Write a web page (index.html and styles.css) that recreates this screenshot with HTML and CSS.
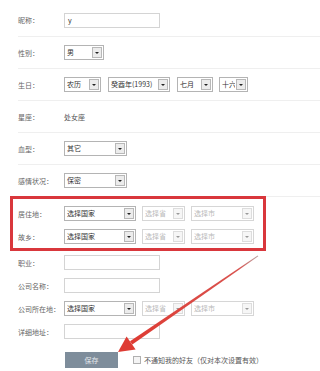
FILE: index.html
```html
<!DOCTYPE html>
<html>
<head>
<meta charset="utf-8">
<link rel="stylesheet" href="styles.css">
</head>
<body>
<div class="page">
  <div class="row r1">
    <span class="lbl">昵称：</span>
    <div class="inp">y</div>
  </div>
  <div class="row r2">
    <span class="lbl">性别：</span>
    <div class="sel w40"><span class="txt">男</span><span class="btn"></span></div>
  </div>
  <div class="row">
    <span class="lbl">生日：</span>
    <div class="sel w37"><span class="txt">农历</span><span class="btn"></span></div>
    <div class="sel w62 gap7"><span class="txt">癸酉年(1993)</span><span class="btn"></span></div>
    <div class="sel w36 gap7"><span class="txt">七月</span><span class="btn"></span></div>
    <div class="sel w28 gap6"><span class="txt">十六</span><span class="btn"></span></div>
  </div>
  <div class="row">
    <span class="lbl">星座：</span>
    <span class="val">处女座</span>
  </div>
  <div class="row">
    <span class="lbl">血型：</span>
    <div class="sel w63"><span class="txt">其它</span><span class="btn"></span></div>
  </div>
  <div class="row">
    <span class="lbl">感情状况：</span>
    <div class="sel w63"><span class="txt">保密</span><span class="btn"></span></div>
  </div>

  <div class="redbox">
    <div class="brow">
      <span class="lbl">居住地：</span>
      <div class="sel w72"><span class="txt">选择国家</span><span class="btn"></span></div>
      <div class="sel w43 gap6 dis"><span class="txt">选择省</span><span class="btn"></span></div>
      <div class="sel w63 gap6 dis"><span class="txt">选择市</span><span class="btn"></span></div>
    </div>
    <div class="brow">
      <span class="lbl">故乡：</span>
      <div class="sel w72"><span class="txt">选择国家</span><span class="btn"></span></div>
      <div class="sel w43 gap6 dis"><span class="txt">选择省</span><span class="btn"></span></div>
      <div class="sel w63 gap6 dis"><span class="txt">选择市</span><span class="btn"></span></div>
    </div>
  </div>

  <div class="srow">
    <span class="lbl">职业：</span>
    <div class="inp"></div>
  </div>
  <div class="srow">
    <span class="lbl">公司名称：</span>
    <div class="inp"></div>
  </div>
  <div class="srow">
    <span class="lbl">公司所在地：</span>
    <div class="sel w72"><span class="txt">选择国家</span><span class="btn"></span></div>
    <div class="sel w43 gap6 dis"><span class="txt">选择省</span><span class="btn"></span></div>
    <div class="sel w63 gap6 dis"><span class="txt">选择市</span><span class="btn"></span></div>
  </div>
  <div class="srow">
    <span class="lbl">详细地址：</span>
    <div class="inp"></div>
  </div>

  <div class="actions">
    <div class="save">保存</div>
    <span class="chk"></span>
    <span class="note">不通知我的好友（仅对本次设置有效）</span>
  </div>
</div>

<svg class="arrow" width="320" height="371" viewBox="0 0 320 371" xmlns="http://www.w3.org/2000/svg">
  <defs>
    <linearGradient id="g" x1="258" y1="256" x2="130" y2="343" gradientUnits="userSpaceOnUse">
      <stop offset="0" stop-color="#b9a2a2"/>
      <stop offset="0.15" stop-color="#d9534f"/>
      <stop offset="1" stop-color="#de3b33"/>
    </linearGradient>
  </defs>
  <polygon points="258.3,256.3 257.7,255.6 130.0,341.2 132.3,344.6" fill="url(#g)"/>
  <polygon points="118,352 126.6,336.6 135.6,349.4" fill="#de3b33"/>
</svg>
</body>
</html>
```

FILE: styles.css
```css
html, body {
  margin: 0;
  padding: 0;
  background: #ffffff;
}

body {
  font-family: "Noto Sans CJK SC", "Noto Sans", "DejaVu Sans", sans-serif;
  font-size: 7px;
  color: #555555;
  width: 320px;
  height: 371px;
  overflow: hidden;
  position: relative;
}

.page {
  display: flex;
  flex-direction: column;
  padding-top: 4px;
}

.row {
  display: flex;
  align-items: center;
  height: 31px;
  margin-left: 18px;
  border-bottom: 1px solid #efefef;
}

.r1 {
  height: 32px;
}

.lbl {
  width: 46px;
  flex: none;
  color: #666666;
  white-space: nowrap;
}

.val {
  color: #555555;
}

.inp {
  width: 91px;
  height: 13px;
  border: 1px solid #d4d4d4;
  line-height: 13px;
  padding-left: 3px;
  color: #333333;
  box-sizing: content-box;
}

.sel {
  display: flex;
  align-items: stretch;
  border: 1px solid #b4b4b4;
  background: #ffffff;
  box-sizing: border-box;
  height: 15px;
  flex: none;
}

.sel .txt {
  flex: 1;
  padding-left: 2px;
  line-height: 13px;
  color: #333333;
  white-space: nowrap;
  overflow: hidden;
}

.sel .btn {
  width: 8px;
  margin: 1px;
  border: 1px solid #b8b8b8;
  background: #ececec;
  position: relative;
  flex: none;
}

.sel .btn::after {
  content: "";
  position: absolute;
  left: 2px;
  top: 4px;
  border-left: 2px solid transparent;
  border-right: 2px solid transparent;
  border-top: 2px solid #222222;
}

.sel.dis {
  border-color: #d6d6d6;
}

.sel.dis .txt {
  color: #b9b9b9;
}

.sel.dis .btn {
  border-color: #dddddd;
  background: #f6f6f6;
}

.sel.dis .btn::after {
  border-top-color: #999999;
}

.w28 { width: 29px; }
.w36 { width: 36px; }
.w37 { width: 37px; }
.w40 { width: 40px; }
.w43 { width: 43px; }
.w62 { width: 62px; }
.w63 { width: 63px; }
.w72 { width: 72px; }

.gap6 { margin-left: 6px; }
.gap7 { margin-left: 7px; }
.gap8 { margin-left: 8px; }

.redbox {
  margin-left: 10px;
  width: 256px;
  box-sizing: border-box;
  border: 3px solid #d9373c;
  padding: 3px 0 0 5px;
  height: 55px;
  margin-top: -1px;
}

.brow {
  display: flex;
  align-items: center;
  height: 23px;
}

.srow {
  display: flex;
  align-items: center;
  height: 23px;
  margin-left: 18px;
}

.actions {
  display: flex;
  align-items: center;
  margin-left: 65px;
  margin-top: 9px;
}

.save {
  width: 53px;
  height: 16px;
  line-height: 16px;
  text-align: center;
  background: #7e8d9b;
  color: #e4e8ec;
  font-size: 7px;
}

.chk {
  width: 6px;
  height: 6px;
  border: 1px solid #b0b0b0;
  background: #f4f4f4;
  margin-left: 15px;
}

.note {
  margin-left: 3px;
  color: #555555;
  white-space: nowrap;
}

.arrow {
  position: absolute;
  left: 0;
  top: 0;
  pointer-events: none;
}
```
